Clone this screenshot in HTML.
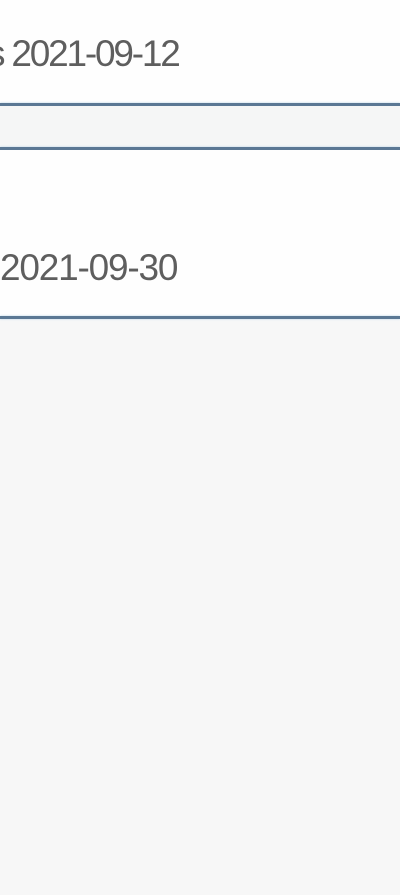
<!DOCTYPE html>
<html><head><style>
body{margin:0;width:400px;height:895px;background:#f7f7f7;position:relative;overflow:hidden;font-family:"Liberation Sans",Arial,sans-serif}
.w{position:absolute;left:0;width:400px;background:#fefefe}
.l{position:absolute;left:0;width:400px;height:3px;background:#5b7894;box-shadow:0 0 2px #b8d4e6}
.t{position:absolute;font-size:37px;letter-spacing:-1.2px;color:#5e5e5e}
</style></head><body>
<div class="w" style="top:0;height:103px"></div>
<div class="l" style="top:103px"></div>
<div class="w" style="top:106px;height:41px;background:#f5f6f6"></div>
<div class="l" style="top:147px"></div>
<div class="w" style="top:150px;height:167px"></div>
<div class="l" style="top:316px"></div>
<div class="t" style="left:-13px;top:33px;letter-spacing:-2.2px">s 2021-09-12</div>
<div class="t" style="left:0;top:247px">2021-09-30</div>
</body></html>
